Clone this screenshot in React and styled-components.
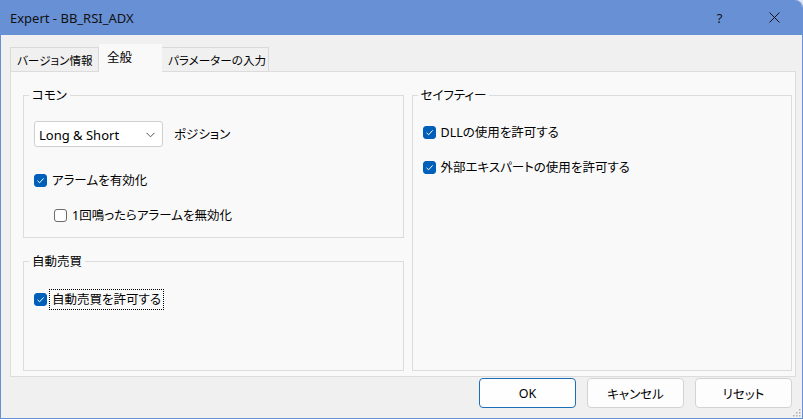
import styled, { createGlobalStyle } from 'styled-components';

const GlobalStyle = createGlobalStyle`
  html, body {
    margin: 0;
    padding: 0;
    background: #dde6f4;
  }
  body {
    font-family: "Noto Sans", "Noto Sans CJK JP", sans-serif;
    font-size: 12px;
    color: #000;
  }
`;

const Window = styled.div`
  position: relative;
  box-sizing: border-box;
  width: 803px;
  height: 419px;
  display: flex;
  flex-direction: column;
  background: #f0f0f0;
  border: 1px solid #6890d5;
  border-top: none;
  border-top-right-radius: 8px;
  overflow: hidden;
`;

const TitleBar = styled.div`
  height: 35px;
  flex: none;
  display: flex;
  align-items: center;
  background: #6890d5;
  padding-left: 9px;
  color: #111;
`;

const Title = styled.div`
  flex: 1;
  font-size: 13px;
  padding-top: 1px;
`;

const CaptionButton = styled.div`
  width: 55px;
  height: 35px;
  display: flex;
  align-items: center;
  justify-content: center;
  font-size: 13px;
  color: #111;
`;

const Body = styled.div`
  flex: 1;
  display: flex;
  flex-direction: column;
  padding: 10px 6px 0 9px;
  min-height: 0;
`;

const TabRow = styled.div`
  height: 27px;
  flex: none;
  display: flex;
  align-items: flex-end;
  margin-bottom: -1px;
`;

const Tab = styled.div`
  position: relative;
  box-sizing: border-box;
  width: ${(p) => p.$w}px;
  height: ${(p) => (p.$active ? 28 : 25)}px;
  display: flex;
  align-items: center;
  padding: 0 0 ${(p) => (p.$active ? 3 : 0)}px ${(p) => (p.$active ? 8 : 6)}px;
  background: ${(p) => (p.$active ? '#f9f9f9' : '#f0f0f0')};
  border: 1px solid ${(p) => (p.$active ? '#f9f9f9' : '#d9d9d9')};
  border-bottom-color: ${(p) => (p.$active ? '#f9f9f9' : '#dcdcdc')};
  font-family: "Noto Sans CJK JP", sans-serif;
  font-feature-settings: "palt";
  font-size: ${(p) => (p.$active ? 12.5 : 11.6)}px;
  white-space: nowrap;
  & + & {
    border-left: none;
  }
`;

const Panel = styled.div`
  flex: 1;
  box-sizing: border-box;
  display: grid;
  grid-template-columns: 1fr 1fr;
  column-gap: 8px;
  padding: 15px 3px 5px 12px;
  background: #f9f9f9;
  border: 1px solid #dcdcdc;
`;

const Column = styled.div`
  display: flex;
  flex-direction: column;
  gap: 15px;
`;

const Group = styled.fieldset`
  margin: 0;
  padding: 0;
  min-width: 0;
  border: 1px solid #dcdcdc;
  flex: ${(p) => (p.$grow ? 1 : 'none')};
`;

const Legend = styled.legend`
  margin-left: 5px;
  padding: 0 3px;
  line-height: 16px;
  font-family: "Noto Sans CJK JP", sans-serif;
  font-feature-settings: "palt";
  font-size: 12.5px;
`;

const GroupContent = styled.div`
  display: flex;
  flex-direction: column;
  align-items: flex-start;
  padding: ${(p) => p.$top}px 10px ${(p) => p.$bottom || 0}px 10px;
  gap: 15px;
`;

const ComboRow = styled.div`
  display: flex;
  align-items: center;
  gap: 10px;
  margin-bottom: 8px;
`;

const Combo = styled.div`
  box-sizing: border-box;
  width: 129px;
  height: 26px;
  display: flex;
  align-items: center;
  justify-content: space-between;
  padding: 1px 7px 0 4px;
  background: #fff;
  border: 1px solid #cfcfcf;
  border-radius: 3px;
  font-size: 13px;
`;

const Label = styled.span`
  font-family: "Noto Sans", "Noto Sans CJK JP", sans-serif;
  font-feature-settings: "palt";
  font-size: 12.5px;
  line-height: 16px;
  padding: 1px 1px 0;
  white-space: nowrap;
  outline: ${(p) => (p.$focus ? '1px dotted #000' : 'none')};
  outline-offset: 1px;
`;

const CheckRow = styled.div`
  height: 20px;
  display: flex;
  align-items: center;
  gap: 4px;
  margin-left: ${(p) => p.$indent || 0}px;
`;

const Box = styled.span`
  box-sizing: border-box;
  width: 13px;
  height: 13px;
  flex: none;
  display: flex;
  align-items: center;
  justify-content: center;
  border-radius: 3px;
  background: ${(p) => (p.$checked ? '#005fb8' : '#fff')};
  border: 1px solid ${(p) => (p.$checked ? '#005fb8' : '#6b6b6b')};
`;

const Footer = styled.div`
  height: 41px;
  flex: none;
  display: flex;
  justify-content: flex-end;
  gap: 11px;
  padding: 1px 10px 0 0;
  box-sizing: border-box;
`;

const Button = styled.div`
  box-sizing: border-box;
  width: 97px;
  height: 30px;
  display: flex;
  align-items: center;
  justify-content: center;
  padding-top: 1px;
  background: ${(p) => (p.$default ? '#fefefe' : '#fdfdfd')};
  border: 1px solid ${(p) => (p.$default ? '#1a6fb8' : '#d3d3d3')};
  border-radius: 4px;
  font-family: "Noto Sans", "Noto Sans CJK JP", sans-serif;
  font-feature-settings: "palt";
  font-size: 12.5px;
`;

const Grip = styled.svg`
  position: absolute;
  right: 1px;
  bottom: 1px;
`;

const Check = ({ checked, label, indent, focus }) => (
  <CheckRow $indent={indent}>
    <Box $checked={checked}>
      {checked && (
        <svg width="9" height="9" viewBox="0 0 9 9">
          <path d="M1.5 4.8 L3.6 6.8 L7.6 2.4" fill="none" stroke="#fff" strokeWidth="1" />
        </svg>
      )}
    </Box>
    <Label $focus={focus}>{label}</Label>
  </CheckRow>
);

const tabs = [
  { label: 'バージョン情報', w: 89 },
  { label: '全般', w: 63, active: true },
  { label: 'パラメーターの入力', w: 107 },
];

export default function App() {
  return (
    <>
      <GlobalStyle />
      <Window>
        <TitleBar>
          <Title>Expert - BB_RSI_ADX</Title>
          <CaptionButton>?</CaptionButton>
          <CaptionButton>
            <svg width="11" height="11" viewBox="0 0 11 11">
              <path d="M0.5 0.5 L10.5 10.5 M10.5 0.5 L0.5 10.5" stroke="#111" strokeWidth="1" />
            </svg>
          </CaptionButton>
        </TitleBar>
        <Body>
          <TabRow>
            {tabs.map((t) => (
              <Tab key={t.label} $w={t.w} $active={t.active}>
                {t.label}
              </Tab>
            ))}
          </TabRow>
          <Panel>
            <Column>
              <Group>
                <Legend>コモン</Legend>
                <GroupContent $top={18} $bottom={12}>
                  <ComboRow>
                    <Combo>
                      <span>Long &amp; Short</span>
                      <svg width="9" height="6" viewBox="0 0 9 6">
                        <path d="M0.5 0.8 L4.5 4.8 L8.5 0.8" fill="none" stroke="#555" strokeWidth="1" />
                      </svg>
                    </Combo>
                    <Label>ポジション</Label>
                  </ComboRow>
                  <Check checked label="アラームを有効化" />
                  <Check indent={20} label="1回鳴ったらアラームを無効化" />
                </GroupContent>
              </Group>
              <Group $grow>
                <Legend>自動売買</Legend>
                <GroupContent $top={20}>
                  <Check checked focus label="自動売買を許可する" />
                </GroupContent>
              </Group>
            </Column>
            <Group>
              <Legend>セイフティー</Legend>
              <GroupContent $top={19}>
                <Check checked label="DLLの使用を許可する" />
                <Check checked label="外部エキスパートの使用を許可する" />
              </GroupContent>
            </Group>
          </Panel>
        </Body>
        <Footer>
          <Button $default>OK</Button>
          <Button>キャンセル</Button>
          <Button>リセット</Button>
        </Footer>
        <Grip width="9" height="9" viewBox="0 0 9 9">
          {[[7, 1], [7, 4], [4, 4], [7, 7], [4, 7], [1, 7]].map(([x, y]) => (
            <rect key={`${x}-${y}`} x={x} y={y} width="1.5" height="1.5" fill="#b0b0b0" />
          ))}
        </Grip>
      </Window>
    </>
  );
}
